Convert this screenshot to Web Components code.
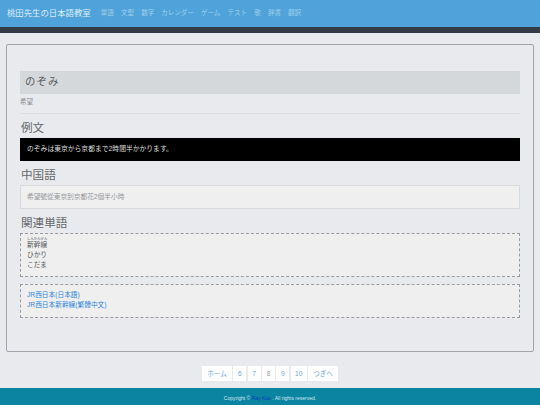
<!DOCTYPE html>
<html lang="ja">
<head>
<meta charset="utf-8">
<title>のぞみ</title>
<style>
html, body { margin: 0; padding: 0; }
body {
  width: 540px;
  height: 405px;
  overflow: hidden;
  background: #e9eaee;
  font-family: "Liberation Sans", "Noto Sans CJK JP", sans-serif;
  display: flex;
  flex-direction: column;
}
ruby { ruby-position: over; }
rt { font-size: 3.4px; line-height: 0; }
a { color: #2f86d8; text-decoration: none; }
.ruby-line { margin-top: -2px; height: 13px !important; }
</style>
</head>
<body>
<site-header></site-header>
<word-panel>
  <word-title>のぞみ</word-title>
  <small-note>希望</small-note>
  <section-head>例文</section-head>
  <sample-box>のぞみは東京から京都まで2時間半かかります。</sample-box>
  <section-head>中国語</section-head>
  <trans-box>希望號從東京到京都花2個半小時</trans-box>
  <section-head>関連単語</section-head>
  <dash-box>
    <div class="ruby-line"><ruby>新幹線<rt>しんかんせん</rt></ruby></div>
    <div>ひかり</div>
    <div>こだま</div>
  </dash-box>
  <dash-box class="links">
    <div><a href="#">JR西日本(日本語)</a></div>
    <div><a href="#">JR西日本新幹線(繁體中文)</a></div>
  </dash-box>
</word-panel>
<page-nav></page-nav>
<site-footer></site-footer>

<script>
class SiteHeader extends HTMLElement {
  constructor() {
    super();
    const items = ["単語", "文型", "数字", "カレンダー", "ゲーム", "テスト", "歌", "辞書", "翻訳"];
    this.attachShadow({mode: "open"}).innerHTML = `
    <style>
      :host { display: block; flex: none; background: #4fa3da; border-bottom: 6px solid #353b44; }
      nav { height: 27px; display: flex; align-items: center; padding: 0 7px 3px; box-sizing: border-box; }
      .brand { color: #dcecf6; font-size: 8.4px; margin-right: 10px; white-space: nowrap; }
      a { color: #a3cfea; font-size: 6.5px; text-decoration: none; margin-right: 7.2px; white-space: nowrap; }
    </style>
    <nav>
      <span class="brand">桃田先生の日本語教室</span>
      ${items.map(i => `<a href="#">${i}</a>`).join("")}
    </nav>`;
  }
}

class WordPanel extends HTMLElement {
  constructor() {
    super();
    this.attachShadow({mode: "open"}).innerHTML = `
    <style>
      :host { display: block; flex: none; margin: 11px 6px 0; height: 308px; box-sizing: border-box;
        border: 1px solid #a3a5aa; border-radius: 2px; padding: 26px 13px 0; }
    </style>
    <slot></slot>`;
  }
}

class WordTitle extends HTMLElement {
  constructor() {
    super();
    this.attachShadow({mode: "open"}).innerHTML = `
    <style>
      :host { display: block; background: #d5d8db; height: 23px; line-height: 22px; padding-left: 5px;
        font-size: 10.4px; letter-spacing: 1.1px; color: #55585b; }
    </style>
    <slot></slot>`;
  }
}

class SmallNote extends HTMLElement {
  constructor() {
    super();
    this.attachShadow({mode: "open"}).innerHTML = `
    <style>
      :host { display: block; height: 20px; padding-top: 3px; box-sizing: border-box; line-height: 9px;
        font-size: 6.5px; color: #8a8d92; border-bottom: 1px solid #dcdee2; }
    </style>
    <slot></slot>`;
  }
}

class SectionHead extends HTMLElement {
  constructor() {
    super();
    this.attachShadow({mode: "open"}).innerHTML = `
    <style>
      :host { display: block; height: 24px; padding-top: 5px; box-sizing: border-box; line-height: 18px;
        font-size: 11.6px; color: #66696c; padding-left: 1px; }
    </style>
    <slot></slot>`;
  }
}

class SampleBox extends HTMLElement {
  constructor() {
    super();
    this.attachShadow({mode: "open"}).innerHTML = `
    <style>
      :host { display: block; background: #000; color: #dedede; height: 23px; line-height: 22px;
        padding-left: 7px; font-size: 6.8px; }
    </style>
    <slot></slot>`;
  }
}

class TransBox extends HTMLElement {
  constructor() {
    super();
    this.attachShadow({mode: "open"}).innerHTML = `
    <style>
      :host { display: block; background: #efeff0; border: 1px solid #d8d9db; height: 24px; box-sizing: border-box;
        line-height: 22px; padding-left: 6px; font-size: 6.7px; color: #95989b; }
    </style>
    <slot></slot>`;
  }
}

class DashBox extends HTMLElement {
  constructor() {
    super();
    this.attachShadow({mode: "open"}).innerHTML = `
    <style>
      :host { display: block; background: #efeff0; border: 1px dashed #9a9b9e; box-sizing: border-box;
        height: 44px; padding: 5px 6px 0; font-size: 6.7px; line-height: 10px; color: #55585b; }
      :host(.links) { margin-top: 7px; height: 34px; }
      ::slotted(div) { height: 10px; }
    </style>
    <slot></slot>`;
  }
}

class PageNav extends HTMLElement {
  constructor() {
    super();
    const pages = [["ホーム", 30], ["6", 13], ["7", 13], ["8", 13], ["9", 13], ["10", 16], ["つぎへ", 30]];
    this.attachShadow({mode: "open"}).innerHTML = `
    <style>
      :host { display: flex; flex: none; justify-content: center; margin-top: 14px; }
      a { display: block; height: 15px; line-height: 15px; background: #fff; text-align: center;
        font-size: 6.5px; color: #6aa5d8; text-decoration: none; margin-right: 1.33px; }
      a:last-child { margin-right: 0; }
      a.off { color: #9a9da0; }
    </style>
    ${pages.map(([t, w]) => `<a href="#" class="${t === "8" ? "off" : ""}" style="width:${w}px">${t}</a>`).join("")}`;
  }
}

class SiteFooter extends HTMLElement {
  constructor() {
    super();
    this.attachShadow({mode: "open"}).innerHTML = `
    <style>
      :host { display: block; flex: none; margin-top: 7px; height: 17px; background: #0a84a0; text-align: center;
        color: #d5e8ee; font-size: 5px; line-height: 20px; }
      a { color: #0a3fc0; text-decoration: none; }
    </style>
    Copyright © <a href="#">Ray Kuo</a> . All rights reserved.`;
  }
}

customElements.define("site-header", SiteHeader);
customElements.define("word-panel", WordPanel);
customElements.define("word-title", WordTitle);
customElements.define("small-note", SmallNote);
customElements.define("section-head", SectionHead);
customElements.define("sample-box", SampleBox);
customElements.define("trans-box", TransBox);
customElements.define("dash-box", DashBox);
customElements.define("page-nav", PageNav);
customElements.define("site-footer", SiteFooter);
</script>
</body>
</html>
